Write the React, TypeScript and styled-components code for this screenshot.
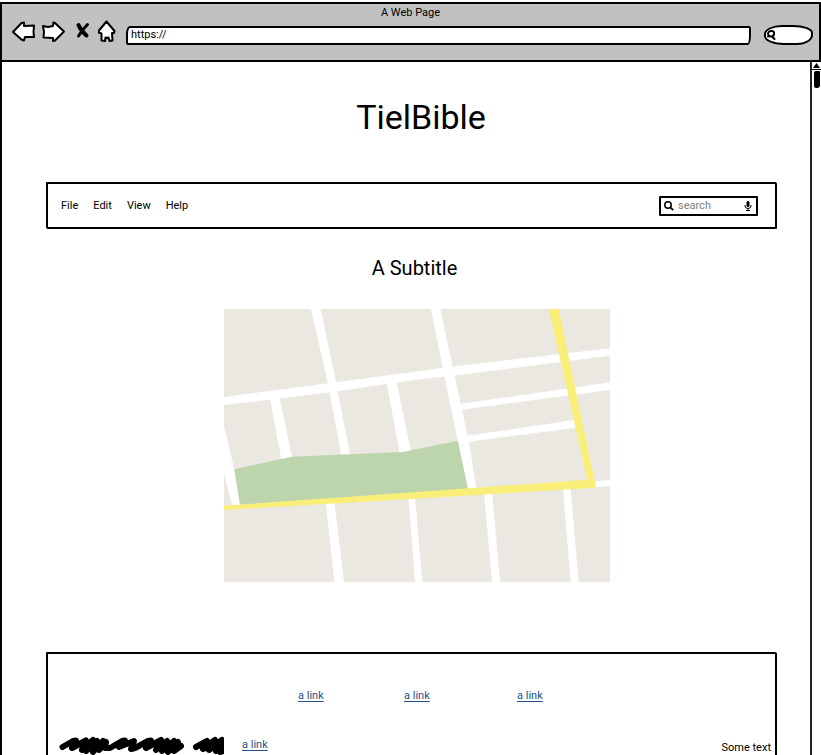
import React from "react";
import styled, { createGlobalStyle } from "styled-components";

const GlobalStyle = createGlobalStyle`
  *, *::before, *::after { box-sizing: border-box; }
  body { margin: 0; background: #fff; }
  body, button, input {
    font-family: Roboto, "Liberation Sans", sans-serif;
    font-size: 11px;
    line-height: 16px;
    color: #000;
  }
`;

const Browser = styled.div`
  display: flex;
  flex-direction: column;
  height: 100vh;
  padding-top: 2px;
  overflow: hidden;
`;

const Chrome = styled.header`
  flex: none;
  height: 60px;
  background: #c1c1c1;
  border: 2px solid #000;
`;

const WindowTitle = styled.div`
  text-align: center;
  height: 16px;
  line-height: 18px;
`;

const Toolbar = styled.div`
  display: flex;
  align-items: flex-start;
  padding: 0 6px 0 8px;
`;

const NavButtons = styled.div`
  display: flex;
  gap: 6px;
  margin-right: 8px;
`;

const NavButton = styled.button<{ $narrow?: boolean }>`
  display: block;
  width: ${(p) => (p.$narrow ? "20px" : "25px")};
  height: 24px;
  padding: 0;
  border: 0;
  background: none;
  svg { display: block; }
`;

const Address = styled.input`
  flex: 1;
  min-width: 0;
  height: 19px;
  margin-top: 6px;
  padding: 0 3px 2px;
  border: 2px solid #000;
  border-radius: 4px 2px 3px 2px / 8px 3px 10px 3px;
  background: #fff;
  outline: none;
`;

const Pill = styled.label`
  display: flex;
  align-items: center;
  width: 49px;
  height: 20px;
  margin: 5px 0 0 13px;
  border: 2px solid #000;
  border-radius: 18px 20px 16px 20px / 9px 8px 10px 9px;
  background: #fff;
  svg { flex: none; }
`;

const BareInput = styled.input`
  flex: 1;
  min-width: 0;
  padding: 0;
  border: 0;
  background: none;
  outline: none;
  &::placeholder { color: #808080; opacity: 1; }
`;

const Viewport = styled.div`
  display: flex;
  flex: 1;
  min-height: 0;
  border-left: 2px solid #000;
`;

const Page = styled.main`
  flex: 1;
  min-width: 0;
  overflow: hidden;
  padding: 0 33px 0 44px;
`;

const ScrollTrack = styled.div`
  flex: none;
  width: 11px;
  border-left: 2px solid #222;
`;

const ScrollUp = styled.div`
  height: 8px;
  border-bottom: 1px solid #000;
  svg { display: block; margin: 0 auto; }
`;

const ScrollThumb = styled.div`
  width: 6px;
  height: 17px;
  margin: 1px auto 0;
  border-radius: 2px 1px 3px 2px;
  background: #000;
`;

const Title = styled.h1`
  margin: 0;
  padding: 35px 0 0 19px;
  font-size: 34px;
  line-height: 40px;
  font-weight: 400;
  text-align: center;
`;

const Panel = styled.div`
  border: 2px solid #000;
  border-radius: 1px 2px 1px 2px;
`;

const MenuBar = styled(Panel)`
  display: flex;
  align-items: center;
  justify-content: space-between;
  height: 47px;
  margin-top: 45px;
  padding: 0 17px 0 13px;
`;

const Menu = styled.nav`
  display: flex;
  gap: 15px;
`;

const MenuItem = styled.button`
  padding: 0;
  border: 0;
  background: none;
`;

const SearchBox = styled.label`
  display: flex;
  align-items: center;
  gap: 4px;
  width: 99px;
  height: 20px;
  padding: 0 4px 0 3px;
  border: 2px solid #000;
  border-radius: 1px;
  svg { flex: none; }
`;

const Subtitle = styled.h2`
  margin: 26px 0 0;
  padding-left: 6px;
  font-size: 20px;
  line-height: 26px;
  font-weight: 400;
  text-align: center;
`;

const MapFigure = styled.figure`
  display: flex;
  justify-content: center;
  margin: 28px 0 70px;
  padding-left: 11px;
`;

const Footer = styled(Panel)`
  height: 180px;
  padding: 34px 4px 0 11px;
`;

const LinkRow = styled.div`
  display: grid;
  grid-template-columns: 106px 113px auto;
  padding-left: 239px;
`;

const BottomRow = styled.div`
  display: flex;
  align-items: center;
  gap: 18px;
  padding-top: 30px;
`;

const Link = styled.a`
  justify-self: start;
  color: #1f4f8c;
  text-decoration: underline;
  text-underline-offset: 2px;
`;

const Note = styled.span`
  margin-left: auto;
  padding-top: 6px;
`;

const Outline = ({ d }: { d: string }) => (
  <path d={d} fill="#fff" stroke="#000" strokeWidth="2" strokeLinejoin="round" strokeLinecap="round" />
);

const roads = [
  "0,88 103.7,74.3 191,62.7 219,58.7 336,45 386,39.3 386,46.7 336,53 231,66.5 196,70.3 106,83.3 46,90.7 0,96",
  "87,0 96.7,0 112,73 126,146 117.3,146 104,75",
  "46,90 55.7,89 68,148 57.3,150",
  "162.7,74 172.3,72 187,142 175.7,144",
  "0,117 10.3,160 16,196 8,196 0,164.3",
  "207,0 216.3,0 228.7,58.3 236.7,94.3 245.3,134.3 252,179 244,180 233.7,131.7 218.7,58.7",
  "235,95 342.7,79.7 386,73.3 386,81 342.7,86.7 236,101",
  "241,127 350.3,111 360,117.7 351,119 242,133",
  "366,172.5 386,171 386,177 370,178.3",
  "102,194 110.6,194 120,273 110.3,273",
  "184.5,188 191,188 198.3,273 191,273",
  "260,184 268.2,184 276,273 268,273",
  "339,180 346.6,180 354.7,273 346.7,273",
];

const CityMap = () => (
  <svg width="386" height="273" viewBox="0 0 386 273" role="img" aria-label="Street map">
    <rect width="386" height="273" fill="#ebe8e1" />
    {roads.map((points) => (
      <polygon key={points} points={points} fill="#fff" />
    ))}
    <polygon points="10.3,160.3 68,147.7 178.7,143 233.7,131.7 244,180 16,196" fill="#bcd5ad" />
    <polygon
      points="0,196.7 196,182.7 363.3,170.7 324.7,0 334.7,0 372,178.7 191,189.7 0,201"
      fill="#f9ef78"
    />
  </svg>
);

const Scribble = () => (
  <svg width="165" height="20" viewBox="0 0 165 20" aria-hidden="true">
    <g fill="none" stroke="#000" strokeWidth="6" strokeLinecap="round" strokeLinejoin="round">
      <path d="M3.500 12 L14 6 L17 5.500 L13 13 L27 5.500 L23 15 L34 5 L27 16 L38 6 L34 17 L44 6 L40 15 L47 7 L46 13 L51 13 L63 6 L66 5.500 L60 12 L75 6 L72 14 L76 13 L89 6 L92 5.500 L87 13 L102 5 L97 15 L108 6 L103 16 L115 6 L109 17 L119 7 L115 16 L122 11" />
      <path d="M137 12 L148 6 L144 14 L156 5 L150 15 L163 5 L157 16 L168 7 L161 17 L168 15" />
    </g>
  </svg>
);

export default function App() {
  return (
    <>
      <GlobalStyle />
      <Browser>
        <Chrome>
          <WindowTitle>A Web Page</WindowTitle>
          <Toolbar>
            <NavButtons>
              <NavButton aria-label="Back">
                <svg width="25" height="24" viewBox="0 0 25 24">
                  <Outline d="M3 12 L11.500 3 L14 2.500 L14 6 L24 5.500 L23.500 12 L24 17 L15 17 L14 20.500 L11.500 19.500 Z" />
                </svg>
              </NavButton>
              <NavButton aria-label="Forward">
                <svg width="25" height="24" viewBox="0 0 25 24">
                  <Outline d="M2 6 L7 7 L12 6 L12.500 2.500 L14 3 L23 11.500 L14 20.500 L12 21 L12 18 L2.500 17.500 L3 12 Z" />
                </svg>
              </NavButton>
              <NavButton aria-label="Stop" $narrow>
                <svg width="20" height="24" viewBox="0 0 20 24">
                  <g stroke="#000" strokeWidth="4" strokeLinecap="round" fill="none">
                    <path d="M6.500 5 Q9 11 14.500 15.500" />
                    <path d="M15.500 4.500 Q11 9 6.500 16" strokeWidth="3" />
                  </g>
                </svg>
              </NavButton>
              <NavButton aria-label="Home" $narrow>
                <svg width="20" height="24" viewBox="0 0 20 24">
                  <Outline d="M8.500 1.500 L16.500 11 L16 13 L14 13 L14.500 20.500 L11.500 21 L10.500 17.500 L9 18 L7.500 17.500 L7 21 L3.500 20.500 L3.500 13.500 L0.500 12.500 L1 10.500 Z" />
                </svg>
              </NavButton>
            </NavButtons>
            <Address aria-label="Address" defaultValue="https://" />
            <Pill>
              <svg width="11" height="12" viewBox="0 0 11 12" aria-hidden="true">
                <path
                  d="M5 2 C9 1 9 7 5.500 7.500 C1 8 1 2 5 2 M2 7.500 L4 7 M6 7.500 L8.500 10"
                  fill="none"
                  stroke="#000"
                  strokeWidth="2"
                  strokeLinecap="round"
                />
              </svg>
              <BareInput aria-label="Web search" />
            </Pill>
          </Toolbar>
        </Chrome>
        <Viewport>
          <Page>
            <Title>TielBible</Title>
            <MenuBar>
              <Menu aria-label="Main">
                <MenuItem>File</MenuItem>
                <MenuItem>Edit</MenuItem>
                <MenuItem>View</MenuItem>
                <MenuItem>Help</MenuItem>
              </Menu>
              <SearchBox>
                <svg width="10" height="10" viewBox="0 0 10 10" aria-hidden="true">
                  <circle cx="4" cy="4" r="3.200" fill="none" stroke="#000" strokeWidth="1.500" />
                  <path d="M6.200 6.200 L9.200 9.200" stroke="#000" strokeWidth="1.800" />
                </svg>
                <BareInput aria-label="Search" placeholder="search" />
                <svg width="8" height="10" viewBox="0 0 8 10" aria-hidden="true">
                  <rect x="2.500" y="0" width="3" height="6" rx="1.500" />
                  <path d="M1 4 V5 A3 2.500 0 0 0 7 5 V4 M4 7.500 V9.500 M2 9.500 H6" fill="none" stroke="#000" />
                </svg>
              </SearchBox>
            </MenuBar>
            <Subtitle>A Subtitle</Subtitle>
            <MapFigure>
              <CityMap />
            </MapFigure>
            <Footer>
              <LinkRow>
                <Link href="#one">a link</Link>
                <Link href="#two">a link</Link>
                <Link href="#three">a link</Link>
              </LinkRow>
              <BottomRow>
                <Scribble />
                <Link href="#four">a link</Link>
                <Note>Some text</Note>
              </BottomRow>
            </Footer>
          </Page>
          <ScrollTrack>
            <ScrollUp>
              <svg width="7" height="6" viewBox="0 0 7 6" aria-hidden="true">
                <path d="M3.500 1 L7 6 H0 Z" />
              </svg>
            </ScrollUp>
            <ScrollThumb />
          </ScrollTrack>
        </Viewport>
      </Browser>
    </>
  );
}
